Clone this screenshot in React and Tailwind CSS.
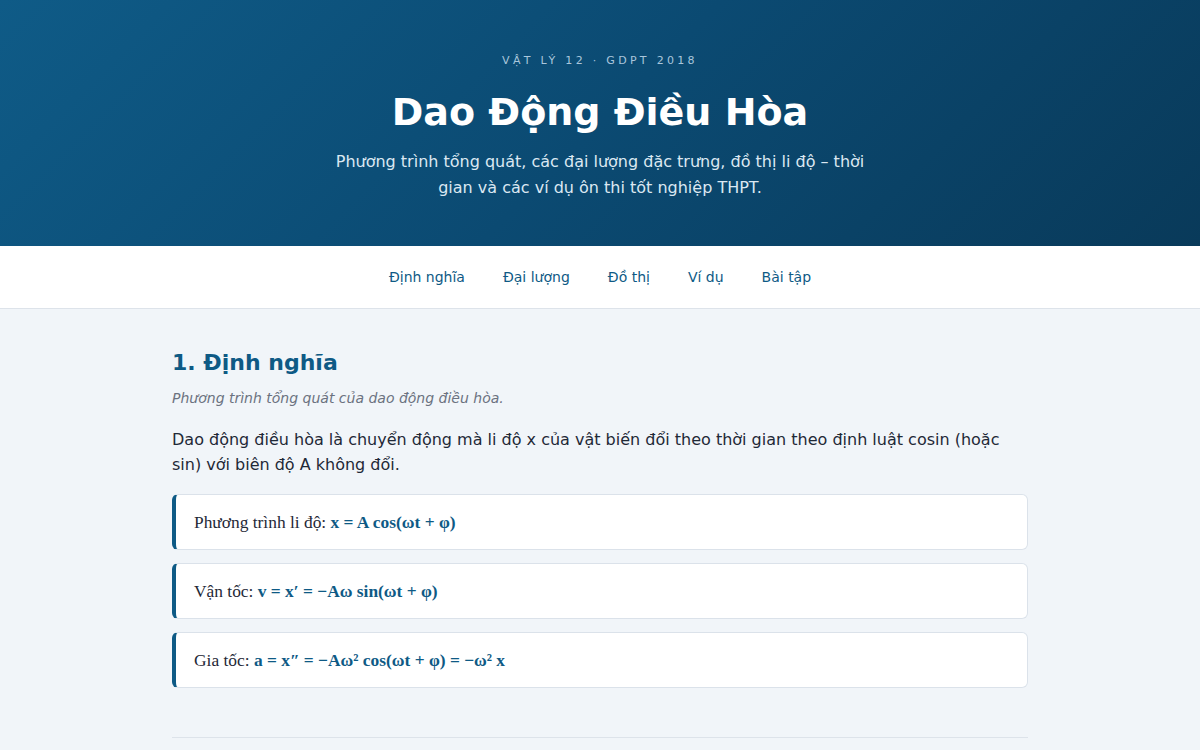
import React from 'react';

const sans = "font-['DejaVu_Sans',sans-serif]";
const serif = "font-['Liberation_Serif',serif]";

const navItems = [
  { id: 'dinh-nghia', label: 'Định nghĩa' },
  { id: 'dai-luong', label: 'Đại lượng' },
  { id: 'do-thi', label: 'Đồ thị' },
  { id: 'vi-du', label: 'Ví dụ' },
  { id: 'bai-tap', label: 'Bài tập' },
];

const formulas = [
  { label: 'Phương trình li độ:', expr: 'x = A cos(ωt + φ)' },
  { label: 'Vận tốc:', expr: 'v = x′ = −Aω sin(ωt + φ)' },
  { label: 'Gia tốc:', expr: 'a = x″ = −Aω² cos(ωt + φ) = −ω² x' },
];

const FormulaCard = ({ label, expr }) => (
  <div className={`bg-white border border-[#dbe2ea] border-l-4 border-l-[#0e5a85] rounded-md h-[56px] flex items-center pl-[18px] ${serif} text-[17.4px] text-[#1f2937]`}>
    <span>{label}&nbsp;</span>
    <b className="text-[#0e5a85]">{expr}</b>
  </div>
);

export default function App() {
  return (
    <div className={`min-h-screen bg-[#f1f5f9] ${sans}`}>
      {/* Hero */}
      <header className="h-[246px] bg-[linear-gradient(135deg,#0f5b87_0%,#0b4a72_50%,#093a5a_100%)] text-center pt-[53px]">
        <p className="text-[11px] tracking-[0.3em] text-[#a9c6dc] leading-4">VẬT LÝ 12 · GDPT 2018</p>
        <h1 className="mt-[20px] text-[38px] font-bold text-white leading-[46px]">Dao Động Điều Hòa</h1>
        <p className="mt-[14px] mx-auto max-w-[540px] text-[16px] leading-[26px] text-[#dbe8f2]">
          Phương trình tổng quát, các đại lượng đặc trưng, đồ thị li độ – thời gian và các ví dụ ôn thi tốt nghiệp THPT.
        </p>
      </header>

      {/* Section nav */}
      <nav className="h-[63px] bg-white border-b border-[#dde3ea] flex items-center justify-center gap-[38px]">
        {navItems.map((item) => (
          <a key={item.id} href={`#${item.id}`} className="text-[14px] text-[#0e5a85]">
            {item.label}
          </a>
        ))}
      </nav>

      <main className="max-w-[856px] mx-auto">
        <section id="dinh-nghia" className="pt-[38px] pb-[49px]">
          <h2 className="text-[22px] font-bold text-[#0e5a85] leading-8">1. Định nghĩa</h2>
          <p className="mt-[9px] text-[14px] italic text-[#6b7280] leading-5">Phương trình tổng quát của dao động điều hòa.</p>
          <p className="mt-[19px] text-[16px] leading-[25px] text-[#1f2937]">
            Dao động điều hòa là chuyển động mà li độ x của vật biến đổi theo thời gian theo định luật cosin (hoặc sin) với biên độ A không đổi.
          </p>
          <div className="mt-[17px] flex flex-col gap-[13px]">
            {formulas.map((f) => (
              <FormulaCard key={f.label} {...f} />
            ))}
          </div>
        </section>
        <div className="border-t border-[#dde3ea] h-[20px]" />
      </main>
    </div>
  );
}
